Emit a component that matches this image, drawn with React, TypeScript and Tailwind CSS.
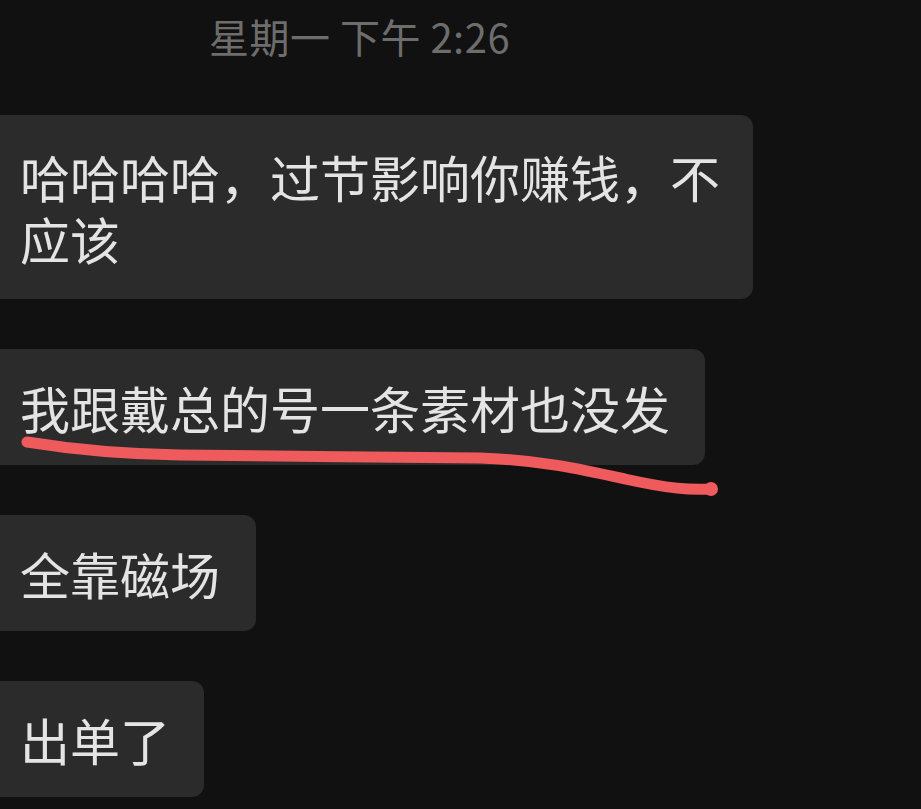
const messages = [
  { id: 1, text: "哈哈哈哈，过节影响你赚钱，不应该", width: "w-[753px] pr-[26px]", py: "py-[30px]" },
  { id: 2, text: "我跟戴总的号一条素材也没发", width: "pr-[35px]", py: "py-[27px]" },
  { id: 3, text: "全靠磁场", width: "pr-[36px]", py: "py-[27px]" },
  { id: 4, text: "出单了", width: "pr-[34px]", py: "py-[27px]" },
];

// freehand highlight drawn over the second message
const Scribble = (): JSX.Element => (
  <svg
    className="pointer-events-none absolute left-0 top-0"
    width="921"
    height="809"
    viewBox="0 0 921 809"
  >
    <path
      d="M27 442 C 70 449, 120 454, 180 455 S 400 457, 480 458 C 540 460, 580 469, 625 479 S 690 490, 711 489"
      fill="none"
      stroke="#ef5a5c"
      strokeWidth="11"
      strokeLinecap="round"
      strokeLinejoin="round"
    />
    <circle cx="711" cy="489" r="7" fill="#ef5a5c" />
  </svg>
);

export default function App(): JSX.Element {
  return (
    <div className="relative h-[809px] w-[921px] overflow-hidden bg-[#111111] font-['Noto_Sans_CJK_SC','Noto_Sans',sans-serif]">
      <div className="h-[72px] pl-[209px] text-[40px] leading-[72px] tracking-[0.5px] text-[#6d6d6d]">
        星期一 下午 2:26
      </div>
      <div className="mt-[43px] flex flex-col items-start gap-[50px]">
        {messages.map((m) => (
          <div
            key={m.id}
            className={
              "rounded-r-[12px] bg-[#2b2b2b] pl-[20px] text-[50px] leading-[62px] text-[#e4e4e4] " +
              m.width +
              " " +
              m.py
            }
          >
            {m.text}
          </div>
        ))}
      </div>
      <Scribble />
    </div>
  );
}
